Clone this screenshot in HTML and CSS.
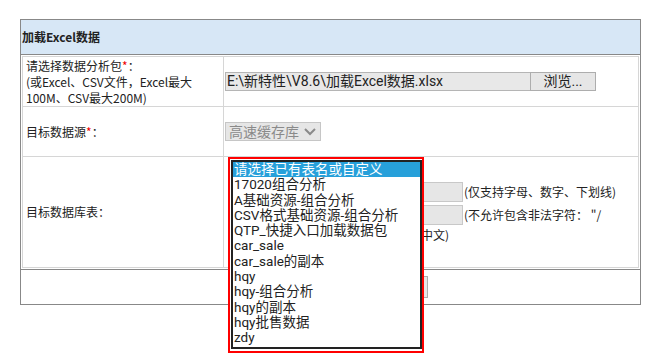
FILE: index.html
```html
<!DOCTYPE html>
<html lang="zh-CN">
<head>
  <meta charset="UTF-8">
  <title>加载Excel数据</title>
  <link rel="stylesheet" href="styles.css">
</head>
<body>
  <div class="panel">
    <div class="panel-head">加载Excel数据</div>

    <table class="form-table">
      <tr class="row-file">
        <td class="label">请选择数据分析包<span class="req">*</span>：<br>(或Excel、CSV文件，Excel最大<br>100M、CSV最大200M)</td>
        <td class="field">
          <div class="file-pick">
            <span class="file-name">E:\新特性\V8.6\加载Excel数据.xlsx</span>
            <span class="file-btn">浏览...</span>
          </div>
        </td>
      </tr>
      <tr class="row-source">
        <td class="label">目标数据源<span class="req">*</span>：</td>
        <td class="field">
          <div class="fake-select">
            高速缓存库
            <svg class="chev" width="14" height="10" viewBox="0 0 14 10"><path d="M2 2l5 5 5-5" fill="none" stroke="#8a8a8a" stroke-width="2"/></svg>
          </div>
        </td>
      </tr>
      <tr class="row-table">
        <td class="label">目标数据库表：</td>
        <td class="field table-field">
          <div class="line"><span class="txt-input"></span><span class="hint">(仅支持字母、数字、下划线)</span></div>
          <div class="line"><span class="txt-input"></span><span class="hint">(不允许包含非法字符： "/</span></div>
          <div class="hint wrap">中文)</div>

          <!-- 下拉列表浮层 -->
          <div class="list-wrap">
            <div class="list">
              <div class="opt active">请选择已有表名或自定义</div>
              <div class="opt">17020组合分析</div>
              <div class="opt">A基础资源-组合分析</div>
              <div class="opt">CSV格式基础资源-组合分析</div>
              <div class="opt">QTP_快捷入口加载数据包</div>
              <div class="opt">car_sale</div>
              <div class="opt">car_sale的副本</div>
              <div class="opt">hqy</div>
              <div class="opt">hqy-组合分析</div>
              <div class="opt">hqy的副本</div>
              <div class="opt">hqy批售数据</div>
              <div class="opt">zdy</div>
            </div>
          </div>
        </td>
      </tr>
    </table>

    <div class="panel-foot">
      <span class="btn"></span>
    </div>
  </div>
</body>
</html>
```

FILE: styles.css
```css
html, body {
  height: 100%;
}

body {
  margin: 0;
  min-height: 356px;
  background: #fff;
  color: #222;
  font-family: "Noto Sans CJK SC", sans-serif;
  font-size: 12px;
}

/* 外框 */
.panel {
  margin: 19px 0 0 20px;
  width: 619px;
  border: 1px solid #888;
}

.panel-head {
  height: 34px;
  line-height: 34px;
  padding-left: 1px;
  background: #d7e7f6;
  border-bottom: 1px solid #888;
  font-weight: bold;
}

/* 表单表格 */
.form-table {
  margin: 1px;
  width: calc(100% - 2px);
  border-collapse: collapse;
  border: 1px solid #ccc;
}

.form-table td {
  border: 1px solid #d6d6d6;
  padding: 0;
  vertical-align: middle;
}

.row-file td { height: 49px; }
.row-source td { height: 49px; }
.row-table td { height: 110px; }

.label {
  width: 197px;
  padding: 0 0 0 3px !important;
  line-height: 16px;
}

.req { color: #e00; }

.field {
  padding-left: 1px !important;
}

/* 文件选择 */
.file-pick {
  display: flex;
  font-family: Roboto, "Noto Sans CJK SC", sans-serif;
  font-size: 14px;
  color: #222;
}

.file-name {
  width: 303px;
  height: 17px;
  line-height: 17px;
  padding-left: 1px;
  background: #e8e8e8;
  border: 1px solid #b5b5b5;
  border-right: none;
  overflow: hidden;
  white-space: nowrap;
}

.file-btn {
  width: 64px;
  height: 17px;
  line-height: 17px;
  text-align: center;
  background: #e6e6e6;
  border: 1px solid #adadad;
}

/* 数据源下拉（禁用） */
.fake-select {
  display: inline-flex;
  align-items: center;
  gap: 4px;
  height: 17px;
  padding: 0 3px 0 3px;
  background: #e6e6e6;
  border: 1px solid #c6c6c6;
  color: #8a8a8a;
  font-size: 14px;
  line-height: 17px;
}

/* 数据库表 */
.table-field {
  position: relative;
}

.line {
  display: flex;
  align-items: center;
  height: 20px;
  margin-bottom: 3px;
}

.txt-input {
  box-sizing: border-box;
  margin-left: 8px;
  width: 230px;
  height: 20px;
  background: #e6e6e6;
  border: 1px solid #c8c8c8;
}

.hint {
  margin-left: 1px;
  line-height: 16px;
  white-space: nowrap;
}

.hint.wrap {
  margin-left: 196px;
  margin-top: -1px;
}

/* 展开的列表浮层 */
.list-wrap {
  position: absolute;
  z-index: 10;
  left: 4px;
  top: 0;
  width: 191px;
  height: 191px;
  border: 2px solid #f00;
  padding: 1px 0 0 1px;
  background: #fff;
  box-sizing: content-box;
}

.list {
  box-sizing: border-box;
  width: 191px;
  height: 189px;
  border: 2px solid #222;
  background: #fff;
  font-family: Roboto, "Noto Sans CJK SC", sans-serif;
  font-size: 13.5px;
  color: #222;
}

.opt {
  height: 15.3px;
  line-height: 15.3px;
  padding-left: 1px;
  white-space: nowrap;
  overflow: hidden;
}

.opt.active {
  background: #27a0da;
  color: #fff;
}

/* 底部按钮 */
.panel-foot {
  display: flex;
  align-items: center;
  height: 34px;
  padding-left: 347px;
  border-top: 1px solid #888;
}

.btn {
  width: 58px;
  height: 20px;
  background: #e6e6e6;
  border: 1px solid #adadad;
}
```
